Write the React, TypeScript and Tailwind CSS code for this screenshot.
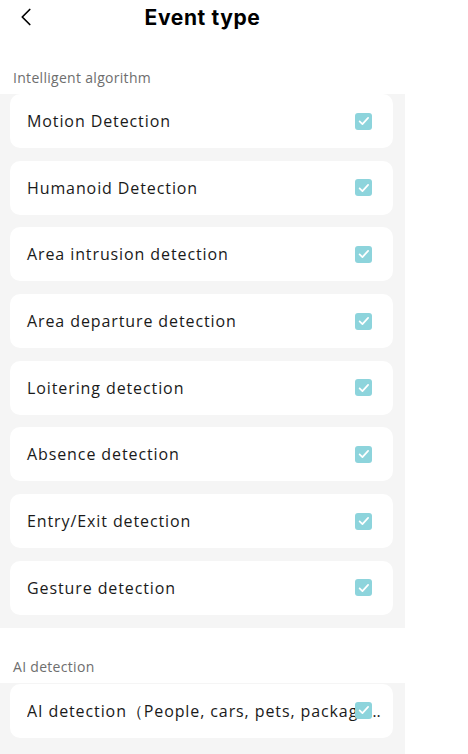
import { ChevronLeft } from 'lucide-react';

const algorithms = [
  'Motion Detection',
  'Humanoid Detection',
  'Area intrusion detection',
  'Area departure detection',
  'Loitering detection',
  'Absence detection',
  'Entry/Exit detection',
  'Gesture detection',
];

function Check() {
  return (
    <span className="w-[17px] h-[17px] rounded-[3px] bg-[#8dd4dc] flex items-center justify-center shrink-0">
      <svg viewBox="0 0 16 16" className="w-[14px] h-[14px]" fill="none" stroke="white" strokeWidth="2" strokeLinecap="round" strokeLinejoin="round">
        <path d="M3 8.5l3.2 3 6.5-7" />
      </svg>
    </span>
  );
}

function Row({ label }: { label: string }) {
  return (
    <div className="h-[54px] bg-white rounded-[10px] flex items-center justify-between pl-[17px] pr-[21px]">
      <span className="text-[16px] text-[#1a1a1a] tracking-[0.9px]">{label}</span>
      <Check />
    </div>
  );
}

export default function App() {
  return (
    <div className="w-[468px] min-h-[754px] bg-white font-['Open_Sans',sans-serif]">
      <div className="w-[405px]">
        <div className="h-[36px] relative flex items-center justify-center">
          <ChevronLeft className="absolute left-[11px] top-[2px] w-[30px] h-[30px] text-black" strokeWidth={1.4} />
          <h1 className="text-[21px] font-bold text-black font-['Inter',sans-serif] tracking-[0.6px]">Event type</h1>
        </div>
        <div className="pt-[35px] pb-[9px] pl-[13px] text-[14px] font-medium tracking-[0.3px] text-[#6e6e6e] leading-none">
          Intelligent algorithm
        </div>
        <div className="bg-[#f5f5f5] pl-[10px] pr-[12px] pb-[13px] flex flex-col gap-[12.7px]">
          {algorithms.map((a) => (
            <Row key={a} label={a} />
          ))}
        </div>
        <div className="pt-[32px] pb-[9px] pl-[13px] text-[14px] font-medium tracking-[0.3px] text-[#6e6e6e] leading-none">
          AI detection
        </div>
        <div className="bg-[#f5f5f5] pl-[10px] pr-[12px] pt-[1px] pb-[20px]">
          <div className="h-[54px] bg-white rounded-[10px] flex items-center pl-[17px] pr-[10px] relative">
            <span className="text-[16px] text-[#1a1a1a] tracking-[0.9px] truncate">
              AI detection（People, cars, pets, packages, faces）
            </span>
            <span className="absolute right-[21px] top-[18px]">
              <Check />
            </span>
          </div>
        </div>
      </div>
    </div>
  );
}
